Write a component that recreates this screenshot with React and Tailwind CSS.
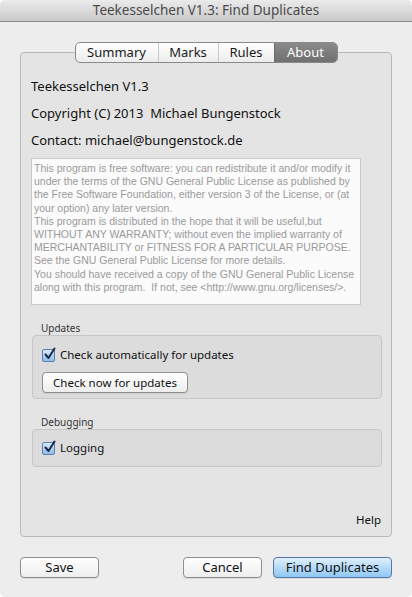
import React from "react";

const font = { fontFamily: '"Noto Sans", "Lucida Grande", sans-serif' };

// little blue checked checkbox, mac style
const CheckBox = () => (
  <span className="w-[13px] h-[13px] rounded-[2px] border border-[#5b7db0] bg-gradient-to-b from-[#d6e8f9] to-[#8fbce9] relative shrink-0">
    <svg className="absolute -top-[3px] left-[0px]" width="14" height="14" viewBox="0 0 14 14">
      <path d="M2.5 7.5 L5.5 11 L11.5 1.5" fill="none" stroke="#1a2a4a" strokeWidth="2" strokeLinecap="round" strokeLinejoin="round" />
    </svg>
  </span>
);

const Button = ({ children, className = "", primary }) => (
  <button
    className={`h-[21px] rounded-[4px] border leading-none shadow-[0_1px_0_rgba(0,0,0,0.08)] ${
      primary
        ? "border-[#5776a8] bg-gradient-to-b from-[#dff0fd] via-[#b6dbf8] to-[#8ec8f3] text-[#111]"
        : "border-[#8e8e8e] bg-gradient-to-b from-white to-[#eeeeee] text-[#111]"
    } ${className}`}
  >
    {children}
  </button>
);

const tabs = ["Summary", "Marks", "Rules", "About"];
const tabWidths = ["w-[82px]", "w-[60px]", "w-[56px]", "w-[63px]"];

const license = [
  "This program is free software: you can redistribute it and/or modify it",
  "under the terms of the GNU General Public License as published by",
  "the Free Software Foundation, either version 3 of the License, or (at",
  "your option) any later version.",
  "This program is distributed in the hope that it will be useful,but",
  "WITHOUT ANY WARRANTY; without even the implied warranty of",
  "MERCHANTABILITY or FITNESS FOR A PARTICULAR PURPOSE.",
  "See the GNU General Public License for more details.",
  "You should have received a copy of the GNU General Public License",
  "along with this program.\u00a0 If not, see <http://www.gnu.org/licenses/>.",
];

export default function App() {
  return (
    <div className="w-[412px] h-[597px] bg-white" style={font}>
      <div className="w-full h-full bg-[#ededed] rounded-[5px] overflow-hidden flex flex-col">
        {/* Title bar */}
        <div className="h-[22px] shrink-0 bg-gradient-to-b from-[#ebebeb] to-[#c9c9c9] border-b border-[#8c8c8c] flex items-center justify-center text-[13.5px] text-[#4a4a4a]">
          Teekesselchen V1.3: Find Duplicates
        </div>

        <div className="px-5 pt-[30px]">
          {/* Tab box */}
          <div className="relative h-[485px] border border-[#b9b9b9] rounded-[4px] bg-[#e4e4e4] flex flex-col pl-[10px]">
            <div className="absolute -top-[11px] left-0 right-0 flex justify-center">
              <div className="flex h-[21px] rounded-[5px] border border-[#8a8a8a] overflow-hidden bg-gradient-to-b from-white to-[#ececec] text-[13px] leading-none">
                {tabs.map((t, i) => (
                  <div
                    key={t}
                    className={`${tabWidths[i]} flex items-center justify-center ${
                      i > 0 && i < 3 ? "border-l border-[#c9c9c9]" : ""
                    } ${
                      t === "About"
                        ? "bg-gradient-to-b from-[#8a8a8a] to-[#707070] text-white border-l border-[#6a6a6a]"
                        : "text-[#1a1a1a]"
                    }`}
                  >
                    {t}
                  </div>
                ))}
              </div>
            </div>

            <div className="flex flex-col gap-[11px] pt-[25px] text-[13px] leading-4 text-[#111]">
              <div>Teekesselchen V1.3</div>
              <div>Copyright (C) 2013&nbsp; Michael Bungenstock</div>
              <div>Contact: michael@bungenstock.de</div>
            </div>

            <div
              className="mt-[10px] w-[330px] h-[147px] border border-[#cacaca] bg-[#fbfbfb] px-[2px] pt-[3px] text-[10.5px] leading-[13.2px] text-[#9a9a9a] whitespace-nowrap overflow-hidden"
              style={{ fontFamily: '"Liberation Sans", Arial, sans-serif' }}
            >
              {license.map((l) => (
                <div key={l}>{l}</div>
              ))}
            </div>

            {/* Updates */}
            <div className="mt-[17px] pl-[10px] h-[13px] text-[10px] leading-[13px] text-[#333]">Updates</div>
            <div className="w-[350px] h-[64px] ml-[1px] border border-[#c6c6c6] rounded-[4px] bg-[#dcdcdc] pl-[9px] pt-[11px] flex flex-col">
              <div className="flex items-center gap-[5px] h-4 text-[11.5px] text-[#111]">
                <CheckBox />
                <span>Check automatically for updates</span>
              </div>
              <Button className="mt-[9px] w-[146px] h-[18px] text-[11.5px]">Check now for updates</Button>
            </div>

            {/* Debugging */}
            <div className="mt-[17px] pl-[10px] h-[13px] text-[10px] leading-[13px] text-[#333]">Debugging</div>
            <div className="w-[350px] h-[38px] ml-[1px] border border-[#c6c6c6] rounded-[4px] bg-[#dcdcdc] pl-[9px] flex items-center">
              <div className="flex items-center gap-[5px] text-[11.5px] text-[#111]">
                <CheckBox />
                <span>Logging</span>
              </div>
            </div>

            <div className="flex-1 flex items-end justify-end pr-[10px] pb-[8px] text-[11.5px] leading-4 text-[#111]">
              Help
            </div>
          </div>

          {/* Bottom buttons */}
          <div className="mt-[20px] flex items-center text-[13px]">
            <Button className="w-[79px]">Save</Button>
            <div className="flex-1" />
            <Button className="w-[79px]">Cancel</Button>
            <Button primary className="w-[119px] ml-[11px]">Find Duplicates</Button>
          </div>
        </div>
      </div>
    </div>
  );
}
